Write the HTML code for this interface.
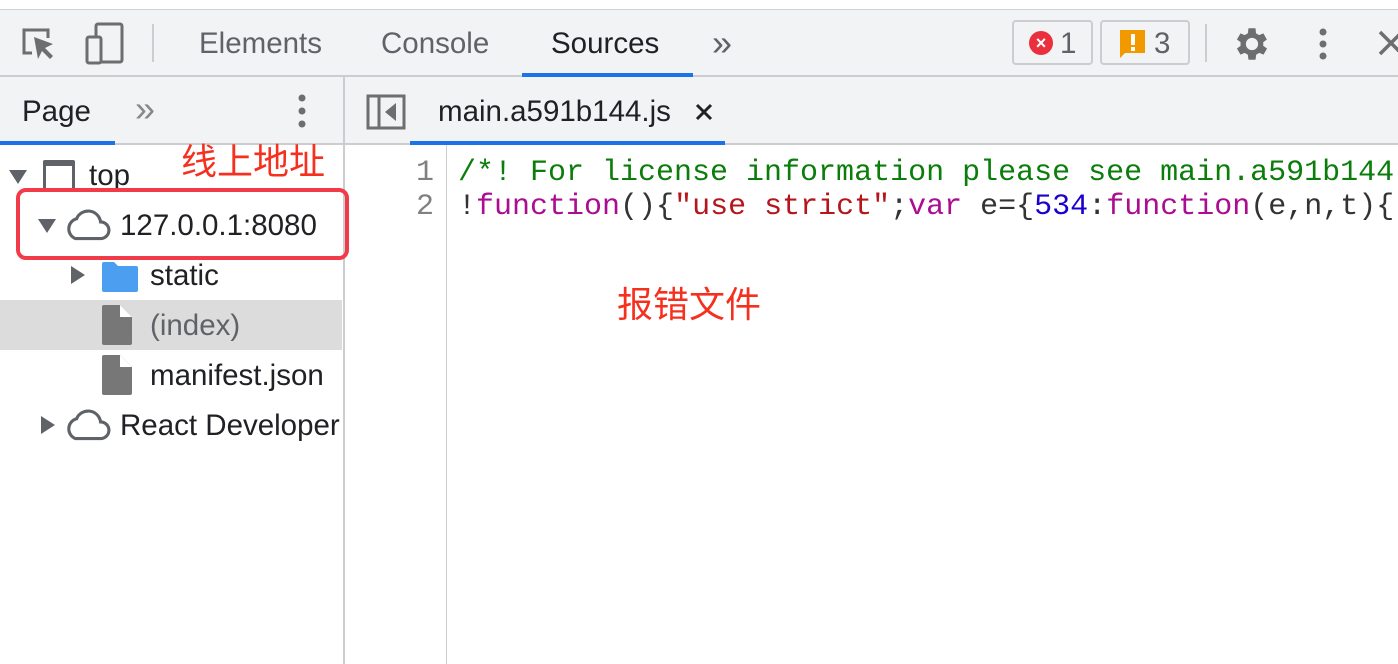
<!DOCTYPE html>
<html><head><meta charset="utf-8"><style>
*{margin:0;padding:0;box-sizing:border-box}
body{width:1398px;height:664px;overflow:hidden;background:#fff;font-family:"Liberation Sans",Arial,sans-serif;position:relative;color:#333}
.abs{position:absolute}
.bar1{left:0;top:9px;width:1398px;height:68px;background:#f1f3f4;border-top:1px solid #d0d2d6;border-bottom:2px solid #cbcdd1}
.bar2{left:0;top:77px;width:1398px;height:68px;background:#f1f3f4;border-bottom:2px solid #cbcdd1}
.t{font-size:29.5px;color:#5f6368;white-space:nowrap}
.tree{font-size:29.5px;color:#202124;white-space:nowrap}
.code{font-family:"Liberation Mono",monospace;font-size:30px;white-space:pre;line-height:34px}
.cn{font-family:"Liberation Sans","Noto Sans CJK SC",sans-serif;color:#f5301e;font-size:36px}
</style></head><body>
<div class="abs bar1"></div>
<div class="abs bar2"></div>
<svg class="abs" style="left:18px;top:24px" width="40" height="40" viewBox="0 0 40 40"><path d="M14 29H6V6h24v8" fill="none" stroke="#6e6e6e" stroke-width="3"/><path d="M16 13l4 22 4-8 8 8 3-3-8-8 8-4z" fill="#6e6e6e"/></svg>
<svg class="abs" style="left:84px;top:22px" width="44" height="44" viewBox="0 0 44 44"><rect x="12" y="2" width="26" height="38" rx="2" fill="none" stroke="#6e6e6e" stroke-width="3"/><rect x="3" y="15" width="14" height="26" rx="2" fill="#f1f3f4" stroke="#6e6e6e" stroke-width="3"/></svg>
<div class="abs" style="left:152px;top:24px;width:2px;height:38px;background:#cbcdd1"></div>
<div class="abs t" style="left:199px;top:27px">Elements</div>
<div class="abs t" style="left:381px;top:27px">Console</div>
<div class="abs t" style="left:551px;top:27px;color:#202124">Sources</div>
<div class="abs" style="left:522px;top:73px;width:171px;height:4px;background:#1a73e8"></div>
<div class="abs t" style="left:712px;top:22px;font-size:36px">»</div>
<div class="abs" style="left:1012px;top:20px;width:81px;height:45px;border:2px solid #cbcdd1;border-radius:4px"></div>
<div class="abs" style="left:1029px;top:31px;width:24px;height:24px;border-radius:50%;background:#e9303c;color:#fff;font-size:18px;line-height:24px;text-align:center;font-weight:bold">×</div>
<div class="abs t" style="left:1060px;top:27px">1</div>
<div class="abs" style="left:1100px;top:20px;width:90px;height:45px;border:2px solid #cbcdd1;border-radius:4px"></div>
<svg class="abs" style="left:1118px;top:28px" width="30" height="30" viewBox="0 0 30 30"><path d="M2 2h25v23H7l-5 5z" fill="#f29900"/><rect x="13" y="6" width="4" height="11" fill="#fff"/><rect x="13" y="19" width="4" height="4" fill="#fff"/></svg>
<div class="abs t" style="left:1154px;top:27px">3</div>
<div class="abs" style="left:1205px;top:24px;width:2px;height:38px;background:#cbcdd1"></div>
<svg class="abs" style="left:1231px;top:23px" width="42" height="42" viewBox="0 0 24 24"><path fill="#6e6e6e" d="M19.4 13a7.5 7.5 0 000-2l2.1-1.6-2-3.5-2.5 1a7 7 0 00-1.7-1L15 3h-4l-.4 2.9a7 7 0 00-1.7 1l-2.5-1-2 3.5L6.5 11a7.5 7.5 0 000 2l-2.1 1.6 2 3.5 2.5-1a7 7 0 001.7 1L11 21h4l.4-2.9a7 7 0 001.7-1l2.5 1 2-3.5zM13 15.5a3.5 3.5 0 110-7 3.5 3.5 0 010 7z" transform="translate(-1 0)"/></svg>
<svg class="abs" style="left:1313px;top:26px" width="20" height="36"><circle cx="10" cy="6" r="3.5" fill="#6e6e6e"/><circle cx="10" cy="18" r="3.5" fill="#6e6e6e"/><circle cx="10" cy="30" r="3.5" fill="#6e6e6e"/></svg>
<svg class="abs" style="left:1378px;top:30px" width="24" height="26"><path d="M2 2l22 22M24 2L2 24" stroke="#6e6e6e" stroke-width="3.5"/></svg>
<div class="abs t" style="left:22px;top:95px;color:#202124">Page</div>
<div class="abs" style="left:0;top:141px;width:115px;height:4px;background:#1a73e8"></div>
<div class="abs t" style="left:135px;top:88px;font-size:36px;color:#888">»</div>
<svg class="abs" style="left:292px;top:93px" width="20" height="36"><circle cx="10" cy="5" r="3.5" fill="#6e6e6e"/><circle cx="10" cy="18" r="3.5" fill="#6e6e6e"/><circle cx="10" cy="31" r="3.5" fill="#6e6e6e"/></svg>
<div class="abs" style="left:343px;top:77px;width:2px;height:587px;background:#cbcdd1"></div>
<svg class="abs" style="left:366px;top:94px" width="40" height="36"><rect x="2" y="2" width="36" height="32" fill="none" stroke="#6e6e6e" stroke-width="3"/><path d="M13 2v32" stroke="#6e6e6e" stroke-width="3"/><path d="M30 9v18l-11-9z" fill="#6e6e6e"/></svg>
<div class="abs t" style="left:438px;top:95px;color:#202124">main.a591b144.js</div>
<svg class="abs" style="left:695px;top:103px" width="18" height="18"><path d="M2 2l14 14M16 2L2 16" stroke="#202124" stroke-width="3"/></svg>
<div class="abs" style="left:410px;top:141px;width:315px;height:4px;background:#1a73e8"></div>
<svg class="abs" style="left:9px;top:170px" width="20" height="16"><path d="M0 0h18L9 14z" fill="#5f6368"/></svg>
<div class="abs" style="left:43px;top:160px;width:32px;height:32px;border:3px solid #5f6368;border-top-width:6px;border-bottom:none;border-radius:2px"></div>
<div class="abs tree" style="left:89px;top:159px">top</div>
<div class="abs cn" style="left:181px;top:133px">线上地址</div>
<div class="abs" style="left:16px;top:188px;width:333px;height:72px;border:4px solid #f23b49;border-radius:10px"></div>
<svg class="abs" style="left:38px;top:219px" width="20" height="16"><path d="M0 0h18L9 14z" fill="#5f6368"/></svg>
<svg class="abs" style="left:63px;top:206px" width="48" height="36" viewBox="0 0 46 34"><path d="M12 31h24a8 8 0 000-16 12 12 0 00-23-3A10 10 0 0012 31z" fill="none" stroke="#5f6368" stroke-width="3"/></svg>
<div class="abs tree" style="left:120px;top:209px">127.0.0.1:8080</div>
<svg class="abs" style="left:71px;top:266px" width="16" height="20"><path d="M0 0v18l14-9z" fill="#5f6368"/></svg>
<svg class="abs" style="left:102px;top:262px" width="36" height="30"><path d="M0 2a2 2 0 012-2h10l4 4h18a2 2 0 012 2v22a2 2 0 01-2 2H2a2 2 0 01-2-2z" fill="#4b9ef0"/></svg>
<div class="abs tree" style="left:150px;top:259px">static</div>
<div class="abs" style="left:0;top:300px;width:342px;height:50px;background:#dcdcdc"></div>
<svg class="abs" style="left:102px;top:305px" width="32" height="40"><path d="M0 2v36a2 2 0 002 2h26a2 2 0 002-2V12L18 0H2a2 2 0 00-2 2z" fill="#777"/><path d="M18 0v12h12z" fill="#fff"/></svg>
<div class="abs tree" style="left:150px;top:309px;color:#5f6368">(index)</div>
<svg class="abs" style="left:102px;top:355px" width="32" height="40"><path d="M0 2v36a2 2 0 002 2h26a2 2 0 002-2V12L18 0H2a2 2 0 00-2 2z" fill="#777"/><path d="M18 0v12h12z" fill="#fff"/></svg>
<div class="abs tree" style="left:150px;top:359px">manifest.json</div>
<svg class="abs" style="left:41px;top:416px" width="16" height="20"><path d="M0 0v18l14-9z" fill="#5f6368"/></svg>
<svg class="abs" style="left:63px;top:406px" width="48" height="36" viewBox="0 0 46 34"><path d="M12 31h24a8 8 0 000-16 12 12 0 00-23-3A10 10 0 0012 31z" fill="none" stroke="#5f6368" stroke-width="3"/></svg>
<div class="abs tree" style="left:120px;top:409px">React Developer</div>
<div class="abs" style="left:446px;top:145px;width:1px;height:519px;background:#cbcdd1"></div>
<div class="abs code" style="left:416px;top:156px;color:#808080">1
2</div>
<div class="abs code" style="left:458px;top:156px"><span style="color:#0b7d0b">/*! For license information please see main.a591b144</span>
<span style="color:#333">!</span><span style="color:#aa0d91">function</span><span style="color:#333">(){</span><span style="color:#b5151b">"use strict"</span><span style="color:#333">;</span><span style="color:#aa0d91">var</span><span style="color:#333"> e={</span><span style="color:#1c00cf">534</span><span style="color:#333">:</span><span style="color:#aa0d91">function</span><span style="color:#333">(e,n,t){</span></div>
<div class="abs cn" style="left:617px;top:276px">报错文件</div>
</body></html>
